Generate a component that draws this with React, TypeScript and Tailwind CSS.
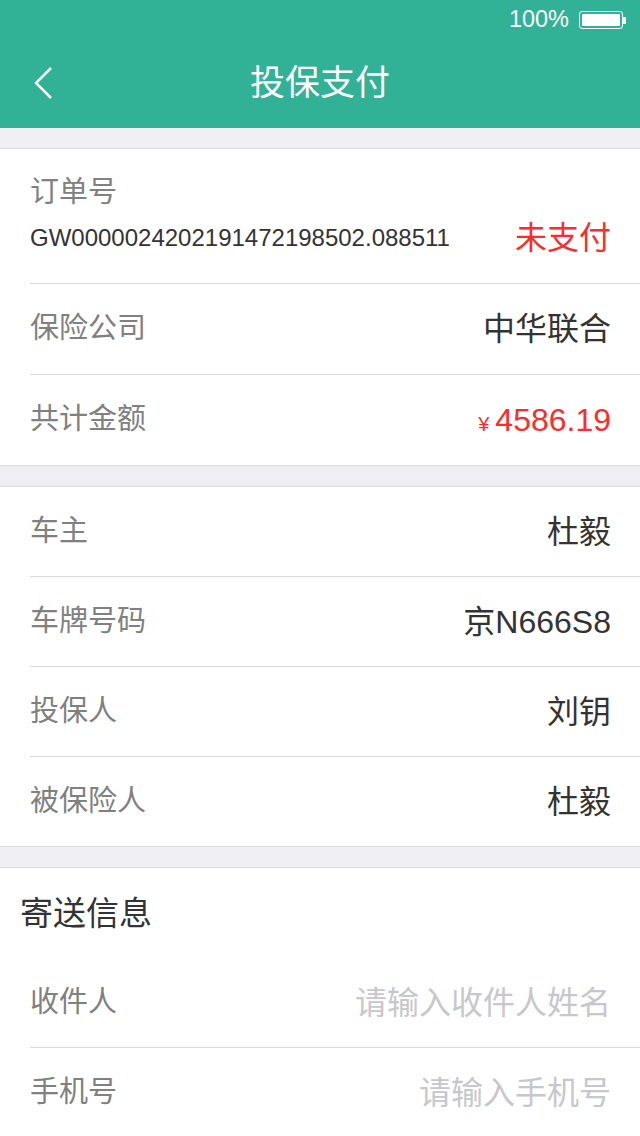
import React from "react";

const font = { fontFamily: '"Liberation Sans", "Noto Sans CJK SC", sans-serif' };

function Row({ label, children, last, h = "h-[90px]" }: { label: string; children: React.ReactNode; last?: boolean; h?: string }) {
  return (
    <div className="pl-[30px]">
      <div className={`${h} flex items-center justify-between pr-[29px] ${last ? "" : "border-b border-[#d9d9d9]"}`}>
        <span className="text-[29px] text-[#808080]">{label}</span>
        {children}
      </div>
    </div>
  );
}

export default function App() {
  return (
    <div className="w-[640px] h-[1136px] bg-[#efeff4] overflow-hidden" style={font}>
      <div className="bg-[#31b195] h-[128px] text-white">
        <div className="h-[40px] flex items-center justify-end pr-[14px] gap-[10px]">
          <span className="text-[23.5px]">100%</span>
          <div className="flex items-center">
            <div className="w-[44px] h-[18px] border border-white rounded-[3px] p-[2px]">
              <div className="w-full h-full bg-white rounded-[1px]" />
            </div>
            <div className="w-[3px] h-[7px] bg-white rounded-r-[1px]" />
          </div>
        </div>
        <div className="relative h-[88px] flex items-center justify-center">
          <svg className="absolute left-[32px] top-[26px]" width="22" height="34" viewBox="0 0 22 34">
            <path d="M19 2 L4 17 L19 32" fill="none" stroke="white" strokeWidth="2.5" />
          </svg>
          <span className="text-[35px] -mt-[2px]">投保支付</span>
        </div>
      </div>

      <div className="mt-[20px] bg-white border-y border-[#d9d9d9]">
        <div className="pl-[30px]">
          <div className="h-[135px] border-b border-[#d9d9d9] pr-[29px] pt-[26px]">
            <div className="text-[29px] text-[#808080] leading-[34px]">订单号</div>
            <div className="flex items-center justify-between mt-[5px]">
              <span className="text-[24px] text-[#333]">GW0000024202191472198502.088511</span>
              <span className="text-[32px] text-[#ff2a2a]">未支付</span>
            </div>
          </div>
        </div>
        <Row label="保险公司" h="h-[91px]">
          <span className="text-[32px] text-[#333]">中华联合</span>
        </Row>
        <Row label="共计金额" last>
          <span className="text-[#ff2a2a] flex items-baseline">
            <span className="text-[20px] mr-[6px]">¥</span>
            <span className="text-[32px]">4586.19</span>
          </span>
        </Row>
      </div>

      <div className="mt-[20px] bg-white border-y border-[#d9d9d9]">
        <Row label="车主">
          <span className="text-[32px] text-[#333]">杜毅</span>
        </Row>
        <Row label="车牌号码">
          <span className="text-[32px] text-[#333]">京N666S8</span>
        </Row>
        <Row label="投保人">
          <span className="text-[32px] text-[#333]">刘钥</span>
        </Row>
        <Row label="被保险人" last h="h-[89px]">
          <span className="text-[32px] text-[#333]">杜毅</span>
        </Row>
      </div>

      <div className="mt-[20px] bg-white border-t border-[#d9d9d9] h-[400px]">
        <div className="h-[90px] flex items-center pl-[20px]">
          <span className="text-[33px] text-[#333] mt-[2px]">寄送信息</span>
        </div>
        <Row label="收件人">
          <span className="text-[32px] text-[#c7c7cc]">请输入收件人姓名</span>
        </Row>
        <Row label="手机号" last>
          <span className="text-[32px] text-[#c7c7cc]">请输入手机号</span>
        </Row>
      </div>
    </div>
  );
}
